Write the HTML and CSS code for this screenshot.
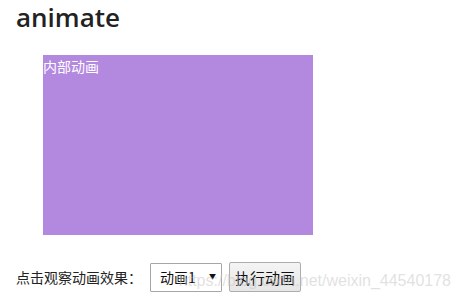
FILE: index.html
```html
<!DOCTYPE html>
<html lang="zh-CN">
<head>
<meta charset="utf-8">
<title>animate</title>
<link rel="stylesheet" href="styles.css">
</head>
<body>
<div class="page">
  <h1 class="title">animate</h1>
  <div class="stage">
    <div class="box">内部动画</div>
  </div>
  <div class="controls">
    <span class="label">点击观察动画效果：</span>
    <span class="select-wrap">
      <select class="select">
        <option>动画1</option>
        <option>动画2</option>
      </select>
      <span class="arrow">▼</span>
    </span>
    <button class="run" type="button">执行动画</button>
  </div>
  <div class="watermark">https://blog.csdn.net/weixin_44540178</div>
</div>
</body>
</html>
```

FILE: styles.css
```css
html, body {
  margin: 0;
  padding: 0;
  background: #ffffff;
}

.page {
  position: relative;
  width: 460px;
  height: 304px;
  overflow: hidden;
  font-family: "Noto Sans CJK SC", "Open Sans", sans-serif;
  color: #222;
}

.title {
  margin: 0;
  padding: 0 0 0 16px;
  font-family: "Open Sans", "Noto Sans CJK SC", sans-serif;
  font-weight: 600;
  font-size: 26px;
  line-height: 34px;
  color: #222;
}

.stage {
  padding: 21px 0 0 43px;
}

.box {
  width: 270px;
  height: 180px;
  background: #b388df;
  color: #ffffff;
  font-size: 14px;
  line-height: 20px;
  padding-top: 1px;
  box-sizing: border-box;
}

.controls {
  display: flex;
  align-items: center;
  margin-top: 27px;
  padding-left: 16px;
}

.label {
  font-size: 14px;
  line-height: 20px;
  color: #222;
  width: 134px;
  white-space: nowrap;
}

.select-wrap {
  position: relative;
  display: inline-block;
  width: 72px;
  height: 29px;
}

.select {
  appearance: none;
  -webkit-appearance: none;
  width: 72px;
  height: 29px;
  margin: 0;
  padding: 0 0 0 9px;
  border: 1px solid #a6a6a6;
  border-radius: 1px;
  background: #ffffff;
  font-family: "Noto Sans CJK SC", sans-serif;
  font-size: 14px;
  color: #111;
  box-sizing: border-box;
}

.arrow {
  position: absolute;
  right: 6px;
  top: 8px;
  font-size: 7px;
  line-height: 10px;
  color: #111;
  pointer-events: none;
}

.run {
  margin-left: 7px;
  width: 72px;
  height: 30px;
  padding: 0;
  border: 1px solid #adadad;
  border-radius: 2px;
  background: linear-gradient(#f4f4f4, #e6e6e6);
  font-family: "Noto Sans CJK SC", sans-serif;
  font-size: 15px;
  color: #111;
  box-sizing: border-box;
}

.watermark {
  position: absolute;
  right: 9px;
  top: 271px;
  font-family: "Liberation Sans", Arial, sans-serif;
  font-size: 16px;
  line-height: 20px;
  color: rgba(200, 200, 200, 0.55);
  white-space: nowrap;
  pointer-events: none;
}
```
